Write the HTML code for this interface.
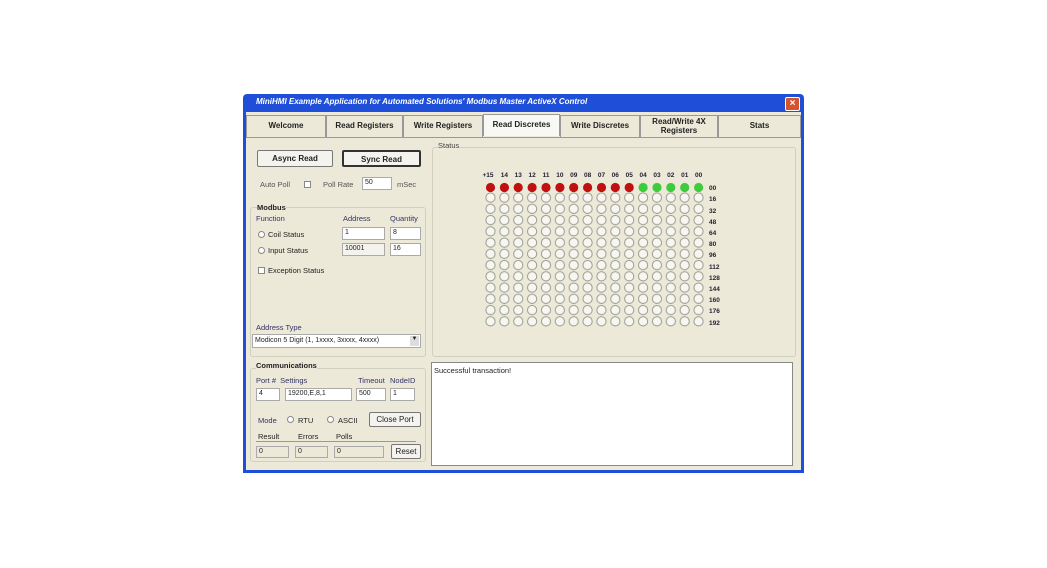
<!DOCTYPE html>
<html><head><style>
body{margin:0;width:1047px;height:568px;background:#fff;position:relative;overflow:hidden;font-family:"Liberation Sans",sans-serif;font-size:8px;color:#222}
div,span{position:absolute;box-sizing:border-box}
.win{left:243px;top:94px;width:561px;height:379px;background:#1f4fd8;border-radius:4px 4px 0 0}
.body{left:246px;top:112px;width:555px;height:358px;background:#ece9d8}
.title{left:256px;top:97px;color:#fff;font-weight:bold;font-style:italic;font-size:8px;white-space:nowrap}
.close{left:785px;top:97px;width:15px;height:14px;background:#d6542d;border:1px solid #fff;border-radius:2px;color:#fff;font-size:10px;line-height:12px;text-align:center;font-weight:bold}
.tab{top:115px;height:22px;border:1px solid #999;border-bottom:none;background:#ece9d8;font-weight:bold;font-size:8px;text-align:center;line-height:20px;white-space:nowrap}
.btn{border:1px solid #777;background:#f4f3ee;text-align:center;font-weight:bold;font-size:8px;border-radius:2px}
.in{background:#fff;border:1px solid #aaa;font-size:7px;padding-left:2px;line-height:10px}
.g{border:1px solid #d0d0bf;border-radius:3px}
.lb{white-space:nowrap;font-size:7.5px}
.bl{color:#336;}
.rd{width:7px;height:7px;border:1px solid #888;border-radius:50%;background:#fff}
</style></head><body>
<div class="win"></div>
<div class="body"></div>
<div class="title">MiniHMI Example Application for Automated Solutions' Modbus Master ActiveX Control</div>
<div class="close">×</div>
<div class="tab" style="left:246px;width:80px">Welcome</div>
<div class="tab" style="left:326px;width:77px">Read Registers</div>
<div class="tab" style="left:403px;width:80px">Write Registers</div>
<div class="tab" style="left:483px;width:77px;background:#f8f8f4;top:114px">Read Discretes</div>
<div class="tab" style="left:560px;width:80px">Write Discretes</div>
<div class="tab" style="left:640px;width:78px;line-height:9px;padding-top:1px">Read/Write 4X<br>Registers</div>
<div class="tab" style="left:718px;width:83px">Stats</div>
<div style="left:246px;top:137px;width:555px;height:1px;background:#999"></div>

<div class="btn" style="left:257px;top:150px;width:76px;height:17px;line-height:15px">Async Read</div>
<div class="btn" style="left:342px;top:150px;width:79px;height:17px;line-height:15px;border:2px solid #333">Sync Read</div>
<div class="lb" style="left:260px;top:180px;color:#555">Auto Poll</div>
<div class="rd" style="left:304px;top:181px;border-radius:0"></div>
<div class="lb" style="left:323px;top:180px;color:#555">Poll Rate</div>
<div class="in" style="left:362px;top:177px;width:30px;height:13px">50</div>
<div class="lb" style="left:397px;top:180px;color:#555">mSec</div>

<div class="g" style="left:250px;top:207px;width:176px;height:150px"></div>
<div class="lb" style="left:257px;top:203px;font-weight:bold;background:#ece9d8">Modbus</div>
<div class="lb bl" style="left:256px;top:214px">Function</div>
<div class="lb bl" style="left:343px;top:214px">Address</div>
<div class="lb bl" style="left:390px;top:214px">Quantity</div>
<div class="rd" style="left:258px;top:231px"></div><div class="lb" style="left:268px;top:230px">Coil Status</div>
<div class="rd" style="left:258px;top:247px"></div><div class="lb" style="left:268px;top:246px">Input Status</div>
<div class="rd" style="left:258px;top:267px;border-radius:0"></div><div class="lb" style="left:268px;top:266px">Exception Status</div>
<div class="in" style="left:342px;top:227px;width:43px;height:13px">1</div>
<div class="in" style="left:390px;top:227px;width:31px;height:13px">8</div>
<div class="in" style="left:342px;top:243px;width:43px;height:13px;background:#f4f3ee">10001</div>
<div class="in" style="left:390px;top:243px;width:31px;height:13px">16</div>
<div class="lb bl" style="left:256px;top:323px">Address Type</div>
<div class="in" style="left:252px;top:334px;width:169px;height:14px;line-height:12px">Modicon 5 Digit (1, 1xxxx, 3xxxx, 4xxxx)</div>
<div style="left:410px;top:336px;width:9px;height:10px;background:#ddd;font-size:6px;text-align:center">▼</div>

<div class="g" style="left:250px;top:368px;width:176px;height:94px"></div>
<div class="lb" style="left:256px;top:361px;font-weight:bold;background:#ece9d8">Communications</div>
<div class="lb bl" style="left:256px;top:376px">Port #&nbsp; Settings</div>
<div class="lb bl" style="left:358px;top:376px">Timeout</div>
<div class="lb bl" style="left:390px;top:376px">NodeID</div>
<div class="in" style="left:256px;top:388px;width:24px;height:13px">4</div>
<div class="in" style="left:285px;top:388px;width:67px;height:13px">19200,E,8,1</div>
<div class="in" style="left:356px;top:388px;width:30px;height:13px">500</div>
<div class="in" style="left:390px;top:388px;width:25px;height:13px">1</div>
<div class="lb bl" style="left:258px;top:416px">Mode</div>
<div class="rd" style="left:287px;top:416px"></div><div class="lb" style="left:298px;top:416px">RTU</div>
<div class="rd" style="left:327px;top:416px"></div><div class="lb" style="left:338px;top:416px">ASCII</div>
<div class="btn" style="left:369px;top:412px;width:52px;height:15px;line-height:13px;font-weight:normal">Close Port</div>
<div class="lb" style="left:258px;top:432px">Result</div>
<div class="lb" style="left:298px;top:432px">Errors</div>
<div class="lb" style="left:336px;top:432px">Polls</div>
<div style="left:256px;top:441px;width:160px;height:1px;background:#999"></div>
<div class="in" style="left:256px;top:446px;width:33px;height:12px;background:#ece9d8">0</div>
<div class="in" style="left:295px;top:446px;width:33px;height:12px;background:#ece9d8">0</div>
<div class="in" style="left:334px;top:446px;width:50px;height:12px;background:#ece9d8">0</div>
<div class="btn" style="left:391px;top:444px;width:30px;height:15px;line-height:13px;font-weight:normal">Reset</div>

<div class="g" style="left:432px;top:147px;width:364px;height:210px"></div>
<div class="lb" style="left:438px;top:141px;background:#ece9d8;color:#444">Status</div>
<svg style="position:absolute;left:0;top:0" width="1047" height="568">
<defs><pattern id="p" x="484.5" y="192" width="13.87" height="11.25" patternUnits="userSpaceOnUse">
<circle cx="6" cy="5.6" r="4.6" fill="#f7f6f0" stroke="#9a9a90" stroke-width="1"/></pattern></defs>
<rect x="484.5" y="192" width="221.9" height="135" fill="url(#p)"/>
<g fill="#c01010"><circle cx="490.5" cy="187.5" r="4.6"/><circle cx="504.4" cy="187.5" r="4.6"/><circle cx="518.2" cy="187.5" r="4.6"/><circle cx="532.1" cy="187.5" r="4.6"/><circle cx="546" cy="187.5" r="4.6"/><circle cx="559.9" cy="187.5" r="4.6"/><circle cx="573.7" cy="187.5" r="4.6"/><circle cx="587.6" cy="187.5" r="4.6"/><circle cx="601.5" cy="187.5" r="4.6"/><circle cx="615.3" cy="187.5" r="4.6"/><circle cx="629.2" cy="187.5" r="4.6"/></g>
<g fill="#3ccc3c"><circle cx="643.1" cy="187.5" r="4.6"/><circle cx="657" cy="187.5" r="4.6"/><circle cx="670.8" cy="187.5" r="4.6"/><circle cx="684.7" cy="187.5" r="4.6"/><circle cx="698.6" cy="187.5" r="4.6"/></g>
<g font-family="Liberation Sans" font-size="6.5" fill="#223" font-weight="bold" text-anchor="middle">
<text x="488" y="177">+15</text><text x="504.4" y="177">14</text><text x="518.2" y="177">13</text><text x="532.1" y="177">12</text><text x="546" y="177">11</text><text x="559.9" y="177">10</text><text x="573.7" y="177">09</text><text x="587.6" y="177">08</text><text x="601.5" y="177">07</text><text x="615.3" y="177">06</text><text x="629.2" y="177">05</text><text x="643.1" y="177">04</text><text x="657" y="177">03</text><text x="670.8" y="177">02</text><text x="684.7" y="177">01</text><text x="698.6" y="177">00</text>
</g>
<g font-family="Liberation Sans" font-size="6.5" fill="#223" font-weight="bold">
<text x="709" y="190">00</text><text x="709" y="201">16</text><text x="709" y="213">32</text><text x="709" y="224">48</text><text x="709" y="235">64</text><text x="709" y="246">80</text><text x="709" y="257">96</text><text x="709" y="269">112</text><text x="709" y="280">128</text><text x="709" y="291">144</text><text x="709" y="302">160</text><text x="709" y="313">176</text><text x="709" y="325">192</text>
</g></svg>

<div style="left:431px;top:362px;width:362px;height:104px;background:#fff;border:1px solid #888"></div>
<div class="lb" style="left:434px;top:366px;font-size:7.5px">Successful transaction!</div>
</body></html>
